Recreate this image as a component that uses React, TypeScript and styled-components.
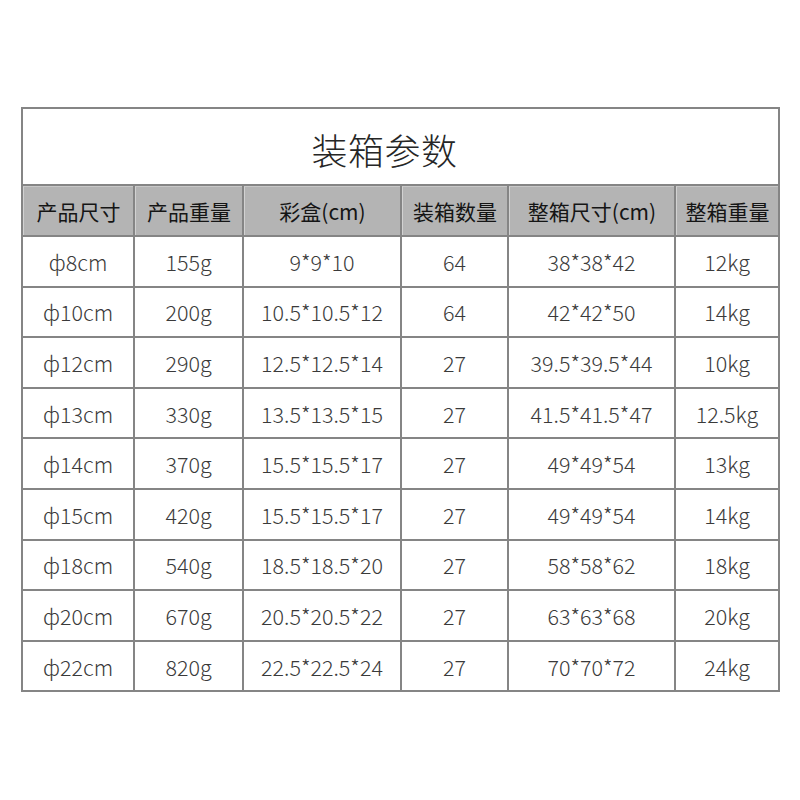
import styled, { createGlobalStyle } from "styled-components";

const GlobalStyle = createGlobalStyle`
  html, body {
    margin: 0;
    padding: 0;
    background: #ffffff;
  }
  body {
    font-family: "Noto Sans CJK SC", "Noto Sans", sans-serif;
  }
`;

const Page = styled.div`
  width: 800px;
  height: 800px;
  padding: 107px 0 0 21px;
  box-sizing: border-box;
  background: #ffffff;
`;

const Table = styled.div`
  display: grid;
  grid-template-columns: 110px 107px 156px 105px 165px 102px;
  grid-template-rows: 75px 49px repeat(9, 48.6px);
  gap: 2px;
  padding: 2px;
  width: max-content;
  background: #858585;
`;

const TitleCell = styled.div`
  grid-column: 1 / -1;
  background: #ffffff;
  display: flex;
  align-items: center;
  justify-content: center;
  padding: 4px 32px 0 0;
  box-sizing: border-box;
  font-size: 36px;
  font-weight: 300;
  color: #262626;
  letter-spacing: 0.5px;
`;

const HeadCell = styled.div`
  background: #b4b4b4;
  border-left: 1px solid #d2d2d2;
  border-top: 1px solid #c8c8c8;
  display: flex;
  align-items: center;
  justify-content: center;
  font-size: 21px;
  color: #151515;
  white-space: nowrap;
`;

const Cell = styled.div`
  background: #ffffff;
  display: flex;
  align-items: center;
  justify-content: center;
  font-size: 21.5px;
  font-weight: 300;
  color: #3a3a3a;
  white-space: nowrap;
`;

const HEADERS = ["产品尺寸", "产品重量", "彩盒(cm)", "装箱数量", "整箱尺寸(cm)", "整箱重量"];

const ROWS = [
  ["ф8cm", "155g", "9*9*10", "64", "38*38*42", "12kg"],
  ["ф10cm", "200g", "10.5*10.5*12", "64", "42*42*50", "14kg"],
  ["ф12cm", "290g", "12.5*12.5*14", "27", "39.5*39.5*44", "10kg"],
  ["ф13cm", "330g", "13.5*13.5*15", "27", "41.5*41.5*47", "12.5kg"],
  ["ф14cm", "370g", "15.5*15.5*17", "27", "49*49*54", "13kg"],
  ["ф15cm", "420g", "15.5*15.5*17", "27", "49*49*54", "14kg"],
  ["ф18cm", "540g", "18.5*18.5*20", "27", "58*58*62", "18kg"],
  ["ф20cm", "670g", "20.5*20.5*22", "27", "63*63*68", "20kg"],
  ["ф22cm", "820g", "22.5*22.5*24", "27", "70*70*72", "24kg"],
];

export default function App() {
  return (
    <Page>
      <GlobalStyle />
      <Table>
        <TitleCell>装箱参数</TitleCell>
        {HEADERS.map((h) => (
          <HeadCell key={h}>{h}</HeadCell>
        ))}
        {ROWS.map((row, r) =>
          row.map((v, c) => <Cell key={`${r}-${c}`}>{v}</Cell>)
        )}
      </Table>
    </Page>
  );
}
